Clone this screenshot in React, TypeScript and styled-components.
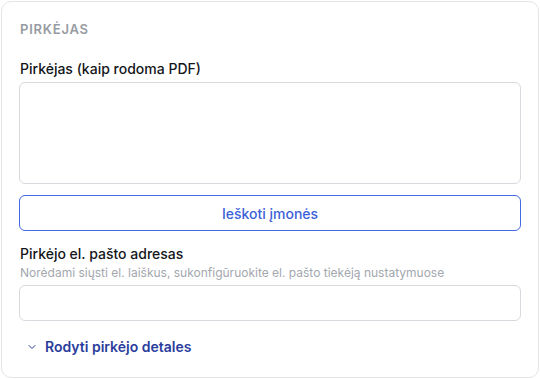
import styled, { createGlobalStyle } from "styled-components";
import { ChevronDown } from "lucide-react";

const GlobalStyle = createGlobalStyle`
	html, body {
		margin: 0;
		padding: 0;
		background: #ffffff;
	}
	body {
		font-family: Inter, "Noto Sans", sans-serif;
		-webkit-font-smoothing: antialiased;
	}
	* {
		box-sizing: border-box;
	}
`;

const App = () => {
	return (
		<>
			<GlobalStyle />
			<Page>
				<Card>
					<SectionTitle>Pirkėjas</SectionTitle>

					<Field $gap={2}>
						<Label>Pirkėjas (kaip rodoma PDF)</Label>
						<TextArea />
					</Field>

					<OutlineButton type="button">Ieškoti įmonės</OutlineButton>

					<Field $gap={0}>
						<Label>Pirkėjo el. pašto adresas</Label>
						<Hint>
							Norėdami siųsti el. laiškus, sukonfigūruokite el. pašto tiekėją
							nustatymuose
						</Hint>
						<Input type="email" />
					</Field>

					<ToggleLink type="button">
						<ChevronDown size={12} strokeWidth={2} />
						Rodyti pirkėjo detales
					</ToggleLink>
				</Card>
			</Page>
		</>
	);
};

const Page = styled.div`
	padding: 1px;
	width: 540px;
	height: 379px;
`;

const Card = styled.section`
	width: 538px;
	height: 377px;
	border: 1px solid #e3e5e9;
	border-radius: 10px;
	background: #fff;
	padding: 19px 17px 20px;
	display: flex;
	flex-direction: column;
`;

const SectionTitle = styled.h3`
	margin: 0 0 23px 1px;
	font-size: 13px;
	line-height: 16px;
	font-weight: 600;
	letter-spacing: 0.06em;
	text-transform: uppercase;
	color: #979ba3;
`;

const Field = styled.div<{ $gap: number }>`
	display: flex;
	flex-direction: column;
	gap: ${(p) => p.$gap}px;
`;

const Label = styled.label`
	font-size: 14px;
	line-height: 18px;
	font-weight: 500;
	color: #14161a;
	margin-left: 1px;
`;

const Hint = styled.span`
	font-size: 12px;
	line-height: 16px;
	color: #a3a7ae;
	margin: 2px 0 4px 1px;
`;

const TextArea = styled.textarea`
	height: 102px;
	width: 100%;
	resize: none;
	border: 1px solid #d6d9de;
	border-radius: 6px;
	font: inherit;
	outline: none;
	margin-top: 2px;
`;

const Input = styled.input`
	height: 36px;
	width: 100%;
	border: 1px solid #d6d9de;
	border-radius: 6px;
	font: inherit;
	outline: none;
`;

const OutlineButton = styled.button`
	margin: 11px 0 14px;
	height: 36px;
	width: 100%;
	border: 1px solid #4569e3;
	border-radius: 6px;
	background: #fff;
	color: #3c5fd8;
	font-family: inherit;
	font-size: 14px;
	font-weight: 500;
	cursor: pointer;
`;

const ToggleLink = styled.button`
	margin-top: 16px;
	align-self: flex-start;
	display: flex;
	align-items: center;
	gap: 7px;
	padding: 0 0 0 7px;
	border: none;
	background: none;
	color: #2a3d9c;
	font-family: inherit;
	font-size: 14px;
	line-height: 20px;
	font-weight: 600;
	cursor: pointer;
`;

export default App;
